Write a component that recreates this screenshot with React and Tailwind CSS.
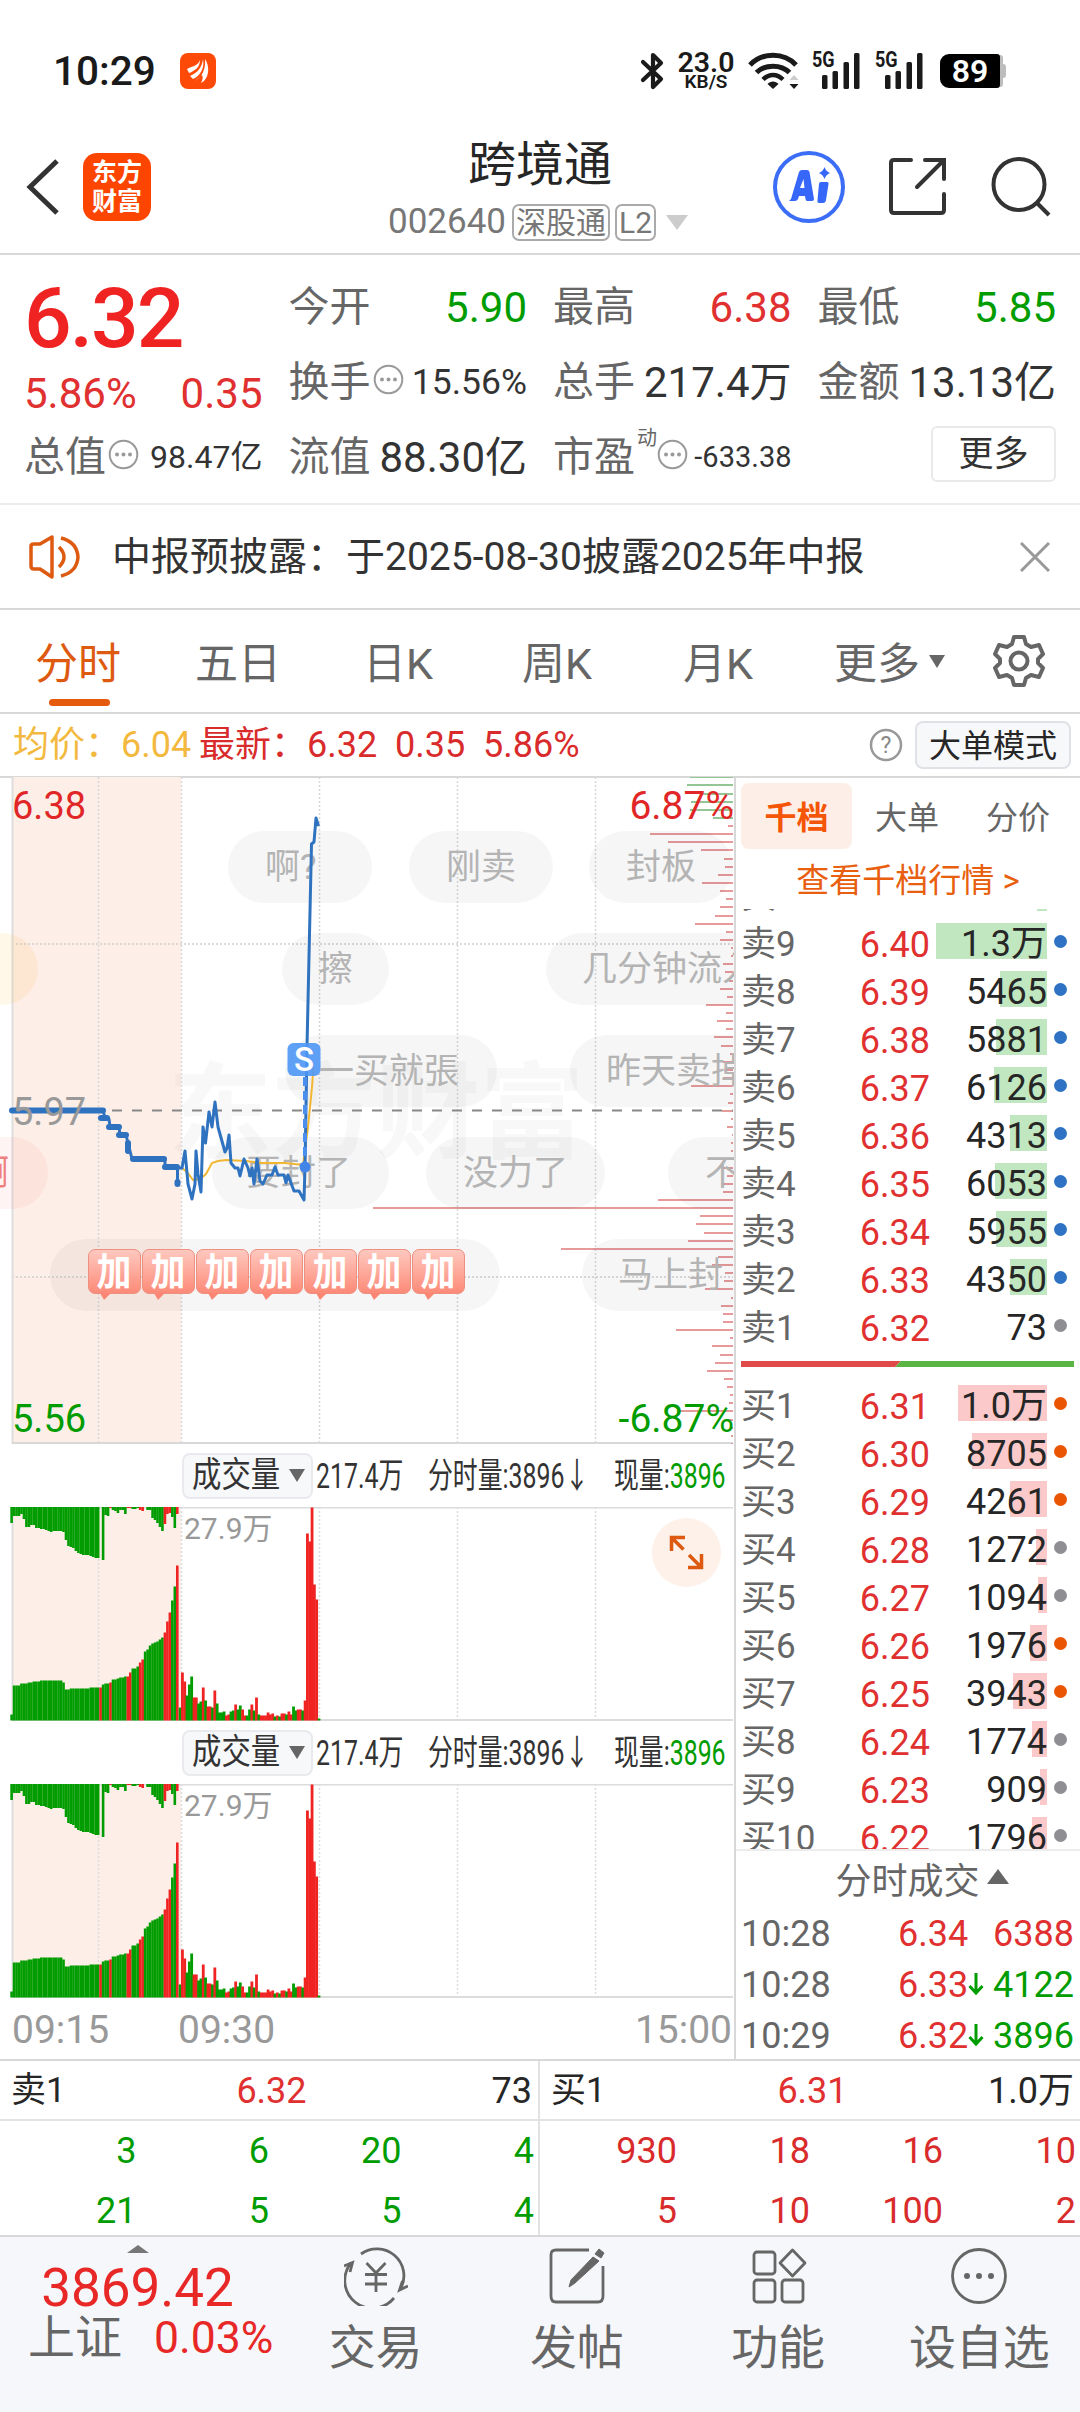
import React from 'react';
import clsx from 'clsx';

const RED = '#f02323';
const GREEN = '#009c00';

// [label, price, volume, bar width, dot colour]
const SELLS = [
  ['卖10', '6.41', '1305', 10, 'blue'],
  ['卖9', '6.40', '1.3万', 111, 'blue'],
  ['卖8', '6.39', '5465', 47, 'blue'],
  ['卖7', '6.38', '5881', 51, 'blue'],
  ['卖6', '6.37', '6126', 53, 'blue'],
  ['卖5', '6.36', '4313', 37, 'blue'],
  ['卖4', '6.35', '6053', 52, 'blue'],
  ['卖3', '6.34', '5955', 51, 'blue'],
  ['卖2', '6.33', '4350', 37, 'blue'],
  ['卖1', '6.32', '73', 0, 'gray'],
];

const BUYS = [
  ['买1', '6.31', '1.0万', 89, 'orange'],
  ['买2', '6.30', '8705', 75, 'orange'],
  ['买3', '6.29', '4261', 37, 'orange'],
  ['买4', '6.28', '1272', 11, 'gray'],
  ['买5', '6.27', '1094', 9, 'gray'],
  ['买6', '6.26', '1976', 17, 'orange'],
  ['买7', '6.25', '3943', 34, 'orange'],
  ['买8', '6.24', '1774', 15, 'gray'],
  ['买9', '6.23', '909', 7, 'gray'],
  ['买10', '6.22', '1796', 15, 'gray'],
];

const TICKS = [
  ['10:28', '6.34', '', '6388'],
  ['10:28', '6.33', '↓', '4122'],
  ['10:29', '6.32', '↓', '3896'],
];

// volume by price, one bar every 8.13px from the top
const PROFILE = [
  43, 46, 31, 42, 43, 20, 5, 83, 65, 32, 9, 8, 15, 31, 13, 7, 13, 18, 38, 7, 13, 2, 2, 10, 8, 4, 13, 6, 27, 7, 16, 7,
  19, 12, 3, 10, 9, 10, 42, 3, 5, 11, 2, 6, 1, 2, 2, 4, 10, 6, 12, 10, 75, 360, 33, 37, 29, 45, 172, 15, 21, 8, 9, 28,
  2, 12, 10, 10, 57, 3, 21, 13, 18, 26, 9, 6, 3, 4, 54, 6, 3, 2, 2,
];

const PRE_TOP = [
  16, 9, 9, 9, 7, 12, 20, 20, 18, 18, 21, 21, 22, 22, 23, 24, 25, 24, 24, 24, 24, 25, 33, 39, 40, 41, 44, 46, 47, 48,
  48, 48, 49, 50, 51, 51, 0, 53, 8, 9, 1, 3, 4, 6, 3, 3, 7, 1, 1, 2, 2, 1, 3, 4, 0, 3, 3, 11, 13, 16, 20, 24, 17, 7,
  6, 10, 21, 7,
];
const PRE_BOTTOM = [
  6, 35, 35, 35, 37, 37, 37, 38, 38, 39, 39, 39, 40, 40, 40, 40, 40, 40, 40, 40, 40, 38, 31, 31, 32, 32, 32, 32, 32,
  32, 32, 32, 33, 33, 33, 33, 33, 36, 37, 37, 38, 41, 41, 42, 43, 43, 44, 44, 48, 52, 52, 54, 58, 61, 69, 71, 75, 77,
  78, 79, 81, 83, 88, 99, 108, 120, 134, 155,
];
const PRE_RED = [36, 40, 47, 48, 52, 53, 62, 63, 64, 67];

// negative = sell volume
const TRADES = [
  -13, 48, 39, -25, -36, -44, 23, 23, -17, -19, 33, -20, 14, 14, -13, 30, -17, -8, -8, -9, 5, 6, -9, -10, 16, -11, -15,
  11, 5, -5, -11, 16, -10, 23, -6, 5, 5, 5, 8, 6, 7, -4, 5, -4, 7, 7, -6, 9, 6, -14, -10, 11, 11, -10, 20, 187, 179,
  213, 136, 121, -2,
];

const PILLS = [
  ['啊?', 228, 54, 144, 37],
  ['刚卖', 409, 54, 144, 37],
  ['封板', 589, 54, 144, 37],
  ['擦', 282, 156, 107, 36],
  ['几分钟流入', 546, 156, 260, 36],
  ['一买就張', 285, 258, 212, 34],
  ['昨天卖掉了', 570, 258, 250, 36],
  ['要封了', 212, 360, 177, 34],
  ['没力了', 426, 360, 179, 37],
  ['不封', 668, 360, 150, 37],
  ['马上封', 582, 462, 180, 36],
];

function Dots() {
  return (
    <svg width="31" height="31" viewBox="0 0 31 31" className="shrink-0">
      <circle cx="15.5" cy="15.5" r="13.8" fill="none" stroke="#999" strokeWidth="2" />
      <circle cx="9" cy="15.5" r="2" fill="#999" />
      <circle cx="15.5" cy="15.5" r="2" fill="#999" />
      <circle cx="22" cy="15.5" r="2" fill="#999" />
    </svg>
  );
}

function Signal() {
  return (
    <div className="relative w-[50px] h-[38px]">
      <span className="absolute left-0 -top-[2px] text-[22px] leading-[20px] font-bold origin-left scale-x-[0.82]">5G</span>
      <svg width="50" height="38" viewBox="0 0 50 38" fill="#1a1a1a">
        <rect x="10" y="23" width="5.5" height="14" rx="1.5" />
        <rect x="20.5" y="19" width="5.5" height="18" rx="1.5" />
        <rect x="31.5" y="10" width="5.5" height="27" rx="1.5" />
        <rect x="42" y="1" width="5.5" height="36" rx="1.5" />
      </svg>
    </div>
  );
}

function StatusBar() {
  return (
    <div className="h-[126px] pt-[15px] pl-[53px] pr-[74px] flex items-center text-[#1a1a1a]">
      <span className="text-[40.5px] leading-[40px] font-medium">10:29</span>
      <svg className="ml-[24px]" width="36" height="36" viewBox="0 0 36 36">
        <rect width="36" height="36" rx="8" fill="#fd4a08" />
        <path d="M7 16 C12 13 18 13 20 7 C20 14 15 18 9 20 Z" fill="#fff" />
        <path d="M10 23 C17 20 22 15 23 6 C25 15 20 23 13 26 Z" fill="#fff" />
        <path d="M15 28 C22 24 26 16 25 6 C31 15 28 27 21 30 C23 26 23 24 22 22 Z" fill="#fff" />
      </svg>
      <div className="ml-auto flex items-center">
        <svg width="26" height="38" viewBox="0 0 26 38" fill="none" stroke="#1a1a1a" strokeWidth="4.2">
          <path d="M3 10 L21 27 L13 35 V3 L21 11 L3 28" strokeLinejoin="round" strokeLinecap="round" />
        </svg>
        <div className="ml-[10px] w-[60px] flex flex-col items-center">
          <span className="text-[28.5px] leading-[21px] font-semibold">23.0</span>
          <span className="text-[19px] leading-[17px] font-semibold">KB/S</span>
        </div>
        <svg className="ml-[12px]" width="52" height="38" viewBox="0 0 52 38" fill="none" stroke="#1a1a1a">
          <path d="M2 13 C14 0 36 0 48 13" strokeWidth="5" />
          <path d="M8.500 20.500 C17 12 33 12 41.500 20.500" strokeWidth="5" />
          <path d="M15 27.500 C21 21.500 29 21.500 35 27.500" strokeWidth="4.5" />
          <path d="M19.500 32 C22 28.500 28 28.500 30.500 32 L25 37 Z" fill="#1a1a1a" stroke="none" />
          <path d="M41.500 28 L46 23 L50.500 28 Z" fill="#ccc" stroke="none" />
          <path d="M41.500 32 H50.500 L46 37 Z" fill="#1a1a1a" stroke="none" />
        </svg>
        <div className="ml-[12px]"><Signal /></div>
        <div className="ml-[13px]"><Signal /></div>
        <div className="ml-[15px] flex items-center">
          <div className="w-[60px] h-[34px] rounded-l-[9px] rounded-r-[3px] bg-black text-white text-[32px] leading-[35px] text-center font-semibold">89</div>
          <div className="w-[3px] h-[32px] rounded-r-[3px] bg-[#bdbdbd]" />
          <div className="w-[3px] h-[14px] rounded-r-[3px] bg-[#bdbdbd]" />
        </div>
      </div>
    </div>
  );
}

function Header() {
  return (
    <div className="h-[129px] border-b-2 border-[#d8d8d8] flex justify-between px-[26px]">
      <div className="w-[330px] flex items-center pb-[5px]">
        <svg width="34" height="58" viewBox="0 0 34 58" fill="none" stroke="#333" strokeWidth="5">
          <path d="M31 3 L4 29 L31 55" />
        </svg>
        <div className="ml-[23px] w-[68px] h-[68px] rounded-[14px] bg-[#fd4500] text-white text-[25px] leading-[29px] font-bold flex flex-col items-center justify-center">
          <span>东方</span>
          <span>财富</span>
        </div>
      </div>
      <div className="flex flex-col items-center">
        <div className="h-[77px] pt-[9px] text-[48px] leading-[60px] text-[#262626]">跨境通</div>
        <div className="relative -left-[2px] flex items-center h-[38px] text-[#777]">
          <span className="text-[35px] leading-[38px]">002640</span>
          <span className="ml-[6px] px-[2px] h-[37px] border-2 border-[#aaa] rounded-[7px] text-[30px] leading-[34px]">深股通</span>
          <span className="ml-[5px] px-[2px] h-[37px] border-2 border-[#aaa] rounded-[7px] text-[30px] leading-[34px]">L2</span>
          <svg className="ml-[10px]" width="22" height="15" viewBox="0 0 22 15"><path d="M0 0 H22 L11 15 Z" fill="#ccc" /></svg>
        </div>
      </div>
      <div className="w-[330px] flex items-center justify-end pb-[5px] pr-[3px]">
        <svg width="74" height="74" viewBox="0 0 74 74">
          <circle cx="37" cy="37" r="34" fill="none" stroke="#3b6df6" strokeWidth="4" />
          <path d="M19 49 L27 22 Q28 20 30 20 H35 Q37 20 37.500 22 L42 49 Q42 51 40 51 H35 Q34 51 33.500 49 L33 46 H27 L26 49 Q25 51 23 51 H17 Z M28 38 H32.500 L31.500 29 Z" fill="#3767f8" fillRule="evenodd" />
          <path d="M49 32 H55 Q57 32 56.500 34 L54 50 Q53.500 53 51 53 H47 Q45 53 45.500 50 L47 34 Q47 32 49 32 Z" fill="#3767f8" />
          <path d="M52.500 17 Q54 21.500 58 23 Q54 24.500 52.500 29 Q51 24.500 47 23 Q51 21.500 52.500 17 Z" fill="#3767f8" />
        </svg>
        <svg className="ml-[41px]" width="62" height="62" viewBox="0 0 62 62" fill="none" stroke="#333" strokeWidth="4" strokeLinecap="round">
          <path d="M24 4 H7 Q4 4 4 7 V54 Q4 57 7 57 H54 Q57 57 57 54 V38" />
          <path d="M38 4 H57 V23 M56 5 L30 31" />
        </svg>
        <svg className="ml-[40px]" width="62" height="62" viewBox="0 0 62 62" fill="none" stroke="#333" strokeWidth="4">
          <circle cx="30" cy="28.500" r="25.500" />
          <path d="M47.500 46.500 L60 59" />
        </svg>
      </div>
    </div>
  );
}

function Stat({ label, value, color = 'text-[#333]', size = 'text-[42px]', icon, sup }) {
  return (
    <div className="flex items-center justify-between h-[75px] text-[#666] whitespace-nowrap">
      <span className="flex items-center text-[41px] leading-[75px]">
        {label}
        {sup && <sup className="text-[20px] leading-[20px] relative -top-[20px] left-[2px]">{sup}</sup>}
        {icon && <span className="relative -top-[3px] ml-[2px]"><Dots /></span>}
      </span>
      <span className={clsx('leading-[75px]', size, color)}>{value}</span>
    </div>
  );
}

function Quote() {
  return (
    <div className="h-[250px] pt-[15px] pl-[24px] pr-[24px] grid grid-cols-4 gap-x-[26px] border-b-2 border-[#ececec]">
      <div>
        <div className="h-[99px] pt-[3px] text-[84px] leading-[92px] font-medium text-[#f02323] tracking-[-2px]">6.32</div>
        <div className="h-[51px] flex justify-between text-[42px] leading-[50px] text-[#e03030]">
          <span>5.86%</span>
          <span>0.35</span>
        </div>
        <Stat label="总值" icon value="98.47亿" size="text-[32px]" />
      </div>
      <div>
        <Stat label="今开" value="5.90" color="text-[#009c00]" />
        <Stat label="换手" icon value="15.56%" size="text-[35.5px]" />
        <Stat label="流值" value="88.30亿" />
      </div>
      <div>
        <Stat label="最高" value="6.38" color="text-[#e03030]" />
        <Stat label="总手" value="217.4万" />
        <Stat label="市盈" sup="动" icon value="-633.38" size="text-[29px]" />
      </div>
      <div>
        <Stat label="最低" value="5.85" color="text-[#009c00]" />
        <Stat label="金额" value="13.13亿" />
        <div className="mt-[6px] ml-auto w-[125px] h-[56px] rounded-[6px] border-2 border-[#e9e9ec] text-center text-[35px] leading-[54px] text-[#333]">更多</div>
      </div>
    </div>
  );
}

function Notice() {
  return (
    <div className="h-[105px] pl-[28px] pr-[30px] flex items-center border-b-2 border-[#d8d8d8]">
      <svg width="54" height="46" viewBox="0 0 54 46" fill="none" stroke="#dd5a10" strokeWidth="3.5">
        <path d="M3 12 Q3 10 6 10 H12 L24 3 V43 L12 35 H6 Q3 35 3 32 Z" strokeLinejoin="round" />
        <path d="M31 13 Q41 23 31 33 M33 4 Q49 8 50 23 Q49 38 33 42" />
      </svg>
      <span className="ml-[30px] text-[39px] leading-[50px] text-[#333]">中报预披露：于2025-08-30披露2025年中报</span>
      <svg className="ml-auto" width="30" height="30" viewBox="0 0 30 30" stroke="#999" strokeWidth="3"><path d="M1 1 L29 29 M29 1 L1 29" /></svg>
    </div>
  );
}

function PeriodTabs() {
  return (
    <div className="h-[104px] relative flex items-center pl-[35px] pr-[34px] border-b-2 border-[#d8d8d8] text-[43px] leading-[60px] text-[#666]">
      <div className="w-[160px] pt-[5px] text-[#dd5a10]">分时</div>
      <div className="w-[168px] pt-[5px]">五日</div>
      <div className="w-[159px] pt-[5px]">日K</div>
      <div className="w-[161px] pt-[5px]">周K</div>
      <div className="w-[151px] pt-[5px]">月K</div>
      <div className="flex items-center pt-[5px]">
        更多
        <svg className="ml-[9px] -mt-[4px]" width="16" height="13" viewBox="0 0 16 13"><path d="M0 0 H16 L8 13 Z" fill="#666" /></svg>
      </div>
      <svg className="ml-auto" width="54" height="54" viewBox="0 0 54 54" fill="none" stroke="#666" strokeWidth="4">
        <path d="M22 3 H32 L34 10 L39 13 L47 11 L51 20 L46 25 V29 L51 34 L47 43 L39 41 L34 44 L32 51 H22 L20 44 L15 41 L7 43 L3 34 L8 29 V25 L3 20 L7 11 L15 13 L20 10 Z" strokeLinejoin="round" />
        <circle cx="27" cy="27" r="8.5" />
      </svg>
      <div className="absolute left-[49px] bottom-[6px] w-[61px] h-[7px] rounded-full bg-[#e55a0c]" />
    </div>
  );
}

function InfoBar() {
  return (
    <div className="h-[64px] flex items-center pl-[13px] pr-[9px] border-b-2 border-[#d8d8d8] text-[36px] leading-[63px] text-[#d92b2b]">
      <span className="text-[#f3b93f] w-[186px] whitespace-nowrap">均价：6.04</span>
      <span>最新：</span>
      <span className="w-[88px]">6.32</span>
      <span className="w-[88px]">0.35</span>
      <span>5.86%</span>
      <svg className="ml-auto" width="34" height="34" viewBox="0 0 34 34">
        <circle cx="17" cy="17" r="15" fill="none" stroke="#999" strokeWidth="2.5" />
        <text x="17" y="25" textAnchor="middle" fontSize="23" fill="#888">?</text>
      </svg>
      <div className="ml-[12px] w-[156px] h-[48px] rounded-[8px] border-2 border-[#dfe1e6] bg-[#f7f8fa] text-center text-[32px] leading-[47px] text-[#262626]">大单模式</div>
    </div>
  );
}

const GRID_X = [98, 181, 319, 457, 595];

function PriceChart() {
  return (
    <div className="relative h-[667px] overflow-hidden">
      <svg className="block" width="734" height="667" viewBox="0 0 734 667">
        <rect x="12" y="0" width="169" height="667" fill="#fdeee7" />
        <text x="168" y="373" fontSize="104" fontWeight="700" fill="#000" opacity="0.025">东方财富</text>
        {GRID_X.map((x) => <path key={x} d={`M${x}.5 0 V667`} stroke="#d8d8d8" strokeWidth="1.5" strokeDasharray="2 2" />)}
        <path d="M12 167 H733 M12 500 H733" stroke="#d0d0d0" strokeWidth="1.5" strokeDasharray="2 2" />
        <path d="M12.5 0 V667" stroke="#ddd" strokeWidth="2" />
        <path d="M12 666 H733" stroke="#d8d8d8" strokeWidth="2" />
        {PROFILE.map((w, i) => (
          <rect key={i} x={733 - w} y={Math.round(8.13 * i - 0.7)} width={w} height="2" fill={i < 6 ? '#94c594' : '#e79a9a'} />
        ))}
      </svg>
      {PILLS.map(([text, left, top, width, pad]) => (
        <div key={text} className="absolute h-[72px] rounded-full bg-black/[0.035] text-[#b4b4b4] text-[35px] leading-[74px] whitespace-nowrap" style={{ left, top, width, paddingLeft: pad }}>{text}</div>
      ))}
      <div className="absolute -left-[60px] top-[156px] w-[98px] h-[72px] rounded-full bg-[#ffb020]/10" />
      <div className="absolute -left-[100px] top-[360px] w-[148px] h-[72px] pr-[39px] rounded-full bg-[#f04040]/[0.06] text-right text-[35px] leading-[74px] text-[#f08080]">啊</div>
      <div className="absolute left-[50px] top-[462px] w-[450px] h-[72px] pl-[38px] pt-[10px] rounded-full bg-black/[0.035] flex gap-[1px]">
        {[0, 1, 2, 3, 4, 5, 6].map((i) => (
          <div key={i} className="relative w-[53px] h-[45px] rounded-[7px] border border-[#ee8f80] bg-linear-to-b from-[#fdc8bf] to-[#fc8a78] text-white text-[38px] leading-[44px] font-bold text-center">
            <span className="inline-block scale-x-[0.92]">加</span>
            <svg className="absolute left-[11px] top-[43px]" width="11" height="7" viewBox="0 0 11 7"><path d="M0 0 H11 L4 7 Z" fill="#fb8674" /></svg>
          </div>
        ))}
      </div>
      <svg className="absolute left-0 top-0" width="734" height="667" viewBox="0 0 734 667">
        <path d="M112 333.5 H733" stroke="#888" strokeWidth="2" strokeDasharray="10 10" />
        <path d="M182 391 L187 395 L193 403 L200 402 L206 397 L212 386 L218 384 L226 383 L246 384 L262 386 L285 386 L303 388 L308 350 L312 310 L313.500 290" fill="none" stroke="#f2b632" strokeWidth="2" />
        <path d="M12 333.5 H103 M101 341 H107 M109 350 H119 M119 358 H126 M128 366 V374 M133 382 H164 M165 390 H177 M177.500 405 V407" stroke="#2f72bf" strokeWidth="6" strokeLinecap="round" fill="none" />
        <path
          d="M103 333 L105 341 L109 342 L110 350 L119 350 L120 358 L126 358 L128 366 L130 374 L132 382 L165 382 V390 H177.500 V406 M177 391 H182 L185 374 L188 407 L192 422 L195 407 L196 374 L198 397 L201 415 L203 350 L205.500 366 L209 335 L212 350 L215 325 L218 350 L225 375 L227 371 L229 358 L231 386 L235 391 H238 L240 399 L244 382 L248 391 L250 399 L252 391 L254 407 L257 382 L260 404 L263 407 L267 398 H272 L275 390 L278 398 H284 L286 406 L288 398 L294 414 H299 L304 423 L305 390 L307 270 L311.500 67 L314 65 L316 41 L318.500 49"
          fill="none" stroke="#2f72bf" strokeWidth="3" strokeLinejoin="round"
        />
        <path d="M305 300 V390" stroke="#4b8fee" strokeWidth="4" strokeDasharray="9 5" />
        <circle cx="305" cy="390" r="5.500" fill="#4285e8" />
        <rect x="287.500" y="266" width="33" height="33" rx="6" fill="#4f97f7" fillOpacity="0.9" />
        <text x="304" y="294" textAnchor="middle" fontSize="33" fontWeight="500" fill="#fff">S</text>
      </svg>
      <div className="absolute left-[12px] top-[9px] text-[38px] leading-[40px] text-[#e02626]">6.38</div>
      <div className="absolute right-0 top-[9px] text-[39px] leading-[40px] text-[#e02626]">6.87%</div>
      <div className="absolute left-[12px] top-[315px] text-[38px] leading-[40px] text-[#999]">5.97</div>
      <div className="absolute left-[12px] top-[622px] text-[38px] leading-[40px] text-[#009c00]">5.56</div>
      <div className="absolute right-0 top-[622px] text-[39px] leading-[40px] text-[#009c00]">-6.87%</div>
    </div>
  );
}

function VolumeChart({ expand }) {
  return (
    <div>
      <div className="h-[63px] flex items-center pl-[182px] text-[35px] leading-[44px] text-[#333] whitespace-nowrap">
        <div className="w-[131px] h-[46px] rounded-[8px] border-2 border-[#e8eaee] bg-[#f7f8fa] flex items-center pl-[8px]">
          <span className="w-[97px]"><span className="inline-block origin-left scale-x-[0.84]">成交量</span></span>
          <svg width="16" height="13" viewBox="0 0 16 13"><path d="M0 0 H16 L8 13 Z" fill="#666" /></svg>
        </div>
        <div className="ml-[3px] w-[112px] pt-[2px]"><span className="inline-block origin-left scale-x-[0.71]">217.4万</span></div>
        <div className="w-[186px] pt-[2px]"><span className="inline-block origin-left scale-x-[0.71]">分时量:3896↓</span></div>
        <div className="w-[115px] pt-[2px]"><span className="inline-block origin-left scale-x-[0.71]">现量:<span className="text-[#009c00]">3896</span></span></div>
      </div>
      <div className="relative h-[214px]">
        <svg className="block" width="734" height="214" viewBox="0 0 734 214">
          <rect x="12" y="0" width="169" height="213" fill="#fdeee7" />
          {GRID_X.map((x) => <path key={x} d={`M${x}.5 0 V213`} stroke="#dcdcdc" strokeWidth="1.5" strokeDasharray="2 2" />)}
          <path d="M12.500 0 V213" stroke="#ddd" strokeWidth="2" />
          <path d="M12 0.500 H733 M12 213 H733" stroke="#dcdcdc" strokeWidth="2" />
          {PRE_TOP.map((h, i) => (
            <rect key={i} x={10.3 + 2.473 * i} y="0" width="2.6" height={h} fill={PRE_RED.includes(i) ? RED : GREEN} />
          ))}
          {PRE_BOTTOM.map((h, i) => (
            <rect key={i} x={10.3 + 2.473 * i} y={213.5 - h} width="2.6" height={h} fill={PRE_RED.includes(i) ? RED : GREEN} />
          ))}
          {TRADES.map((v, i) => (
            <rect key={i} x={178.7 + 2.315 * i} y={213.5 - Math.abs(v)} width="2.8" height={Math.abs(v)} fill={v > 0 ? RED : GREEN} />
          ))}
        </svg>
        <div className="absolute left-[184px] top-[4px] text-[30px] leading-[36px] text-[#999]">27.9万</div>
        {expand && (
          <div className="absolute left-[652px] top-[11px] w-[69px] h-[69px] rounded-full bg-[#fdf1ea] flex items-center justify-center">
            <svg width="35" height="35" viewBox="0 0 35 35" fill="none" stroke="#dd5a10" strokeWidth="3.5">
              <path d="M2.500 16 V2.500 H16 M3 3 L14.500 14.500 M32.500 19 V32.500 H19 M32 32 L20 20" />
            </svg>
          </div>
        )}
      </div>
    </div>
  );
}

const DOT = { blue: 'bg-[#2f72c4]', orange: 'bg-[#ea5504]', gray: 'bg-[#8e8e93]' };

function BookRow({ row, bar }) {
  const [label, price, qty, width, dot] = row;
  return (
    <div className="h-[48px] shrink-0 flex items-center pl-[5px] pr-[13px] text-[36px] leading-[48px]">
      <span className="pt-[5px] w-[91px] text-[35px] text-[#666] whitespace-nowrap">{label}</span>
      <span className="pt-[5px] w-[98px] text-right text-[#e03030]">{price}</span>
      <span className="relative flex-1 h-[48px] text-right text-[#262626]">
        <span className={clsx('absolute right-0 top-[5px] h-[36px]', bar)} style={{ width }} />
        <span className="relative top-[2px]">{qty}</span>
      </span>
      <span className={clsx('ml-[7px] -mt-[1px] size-[13px] rounded-full', DOT[dot])} />
    </div>
  );
}

function OrderBook() {
  return (
    <div className="w-[346px] h-[1282px] border-l-2 border-[#d8d8d8]">
      <div className="pt-[6px] ml-[5px] flex h-[72px] text-[32px] leading-[70px] text-center text-[#666]">
        <div className="w-[111px] rounded-[8px] bg-[#fdeee7] text-[#f45506] font-bold">千档</div>
        <div className="w-[110px]">大单</div>
        <div className="w-[112px]">分价</div>
      </div>
      <div className="h-[60px] text-[33px] leading-[63px] text-center text-[#e8600f]">查看千档行情 &gt;</div>
      <div className="h-[441px] overflow-hidden flex flex-col justify-end">
        {SELLS.map((r) => <BookRow key={r[0]} row={r} bar="bg-[#c0e7c0]" />)}
      </div>
      <svg className="block mt-[11px] ml-[5px]" width="333" height="6" viewBox="0 0 333 6">
        <path d="M0 0 H160 L154 6 H0 Z" fill="#e04a48" />
        <path d="M160 0 H333 V6 H154 Z" fill="#5bb544" />
      </svg>
      <div className="mt-[13px] h-[471px] overflow-hidden border-b-2 border-[#ececec]">
        {BUYS.map((r) => <BookRow key={r[0]} row={r} bar="bg-[#fbc9c9]" />)}
      </div>
      <div className="h-[56px] flex items-center justify-center pl-[28px] text-[36px] leading-[56px] text-[#666]">
        <span className="pt-[5px]">分时成交</span>
        <svg className="ml-[7px] -mt-[6px]" width="22" height="15" viewBox="0 0 22 15"><path d="M0 15 H22 L11 0 Z" fill="#666" /></svg>
      </div>
      {TICKS.map(([time, price, arrow, qty]) => (
        <div key={qty} className="h-[51px] flex pl-[5px] pr-[6px] text-[36px] leading-[55px]">
          <span className="w-[157px] text-[#666]">{time}</span>
          <span className="w-[70px] text-[#e03030]">{price}</span>
          <span className="flex-1 flex items-center">
            {arrow && (
              <svg width="16" height="24" viewBox="0 0 16 24" fill="none" stroke="#009c00" strokeWidth="3"><path d="M8 1 V21 M1.500 14 L8 21 L14.500 14" /></svg>
            )}
          </span>
          <span className={arrow ? 'text-[#009c00]' : 'text-[#e03030]'}>{qty}</span>
        </div>
      ))}
    </div>
  );
}

function QueueSide({ label, price, qty, color, values, className }) {
  return (
    <div className={clsx('w-1/2 text-[36px] leading-[60px]', className)}>
      <div className="h-[60px] flex items-center justify-between border-b-2 border-[#e2e2e2] pl-[11px] pr-[6px] text-[#262626]">
        <span className="w-[160px] pt-[2px] text-[35px]">{label}</span>
        <span className="pt-[2px] text-[#e03030]">{price}</span>
        <span className="w-[160px] pt-[2px] text-right">{qty}</span>
      </div>
      <div className={clsx('grid grid-cols-4 pl-[4px] pr-[4px] text-right', color)}>
        {values.map((v, i) => <span key={i}>{v}</span>)}
      </div>
    </div>
  );
}

function NavItem({ label, children }) {
  return (
    <div className="flex-1 flex flex-col items-center">
      <svg className="mt-[9px]" width="64" height="60" viewBox="0 0 64 60" fill="none" stroke="#666" strokeWidth="2.8">{children}</svg>
      <span className="mt-[12px] text-[47px] leading-[60px] whitespace-nowrap">{label}</span>
    </div>
  );
}

function BottomNav() {
  return (
    <div className="h-[176px] bg-[#f6f7fa] flex text-[#666]">
      <div className="w-[275px] flex flex-col items-center">
        <svg className="mt-[8px]" width="22" height="8" viewBox="0 0 22 8"><path d="M0 8 H22 L11 0 Z" fill="#777" /></svg>
        <span className="mt-[7px] text-[53px] leading-[56px] text-[#e82727]">3869.42</span>
        <div className="flex w-full pl-[28px] text-[47px] leading-[44px]">
          <span className="w-[126px]">上证</span>
          <span className="text-[44.5px] text-[#e82727]">0.03%</span>
        </div>
      </div>
      <NavItem label="交易">
        <path d="M17 8 A27 27 0 0 1 57 42 M50 52 A27 27 0 0 1 7 17" />
        <path d="M0 20 L8.500 16.500 L6 26 M64 40 L55.500 44 L58.500 35" />
        <path d="M22.500 17 L32 27 L41.500 17 M32 27 V46 M21 28.500 H43 M21 38 H43" />
      </NavItem>
      <NavItem label="发帖">
        <path d="M44 4 H11 Q6 4 6 9 V50 Q6 56 11 56 H53 Q58 56 58 50 V20" />
        <path d="M54 3 L59 7 L56 12 L50 8 Z M48 11 L54 15 L30 37 L24 41 L26 34 Z" fill="#666" strokeWidth="1" />
      </NavItem>
      <NavItem label="功能">
        <rect x="8" y="6" width="21" height="22" rx="3" />
        <rect x="8" y="34" width="21" height="22" rx="3" />
        <rect x="36" y="34" width="21" height="22" rx="3" />
        <path d="M46.500 4 L59 17 L46.500 30 L34 17 Z" strokeLinejoin="round" />
      </NavItem>
      <NavItem label="设自选">
        <circle cx="32" cy="30" r="26.500" />
        <g fill="#666" stroke="none">
          <circle cx="20" cy="30" r="3" />
          <circle cx="32" cy="30" r="3" />
          <circle cx="44" cy="30" r="3" />
        </g>
      </NavItem>
    </div>
  );
}

export default function App() {
  return (
    <div className="w-[1080px] h-[2412px] overflow-hidden bg-white font-[Roboto,'Noto_Sans_CJK_SC',sans-serif]">
      <StatusBar />
      <Header />
      <Quote />
      <Notice />
      <PeriodTabs />
      <InfoBar />
      <div className="flex h-[1282px] mt-[-1px]">
        <div className="w-[734px]">
          <PriceChart />
          <VolumeChart expand />
          <VolumeChart />
          <div className="flex h-[61px] pl-[12px] pr-[2px] text-[39px] leading-[65px] text-[#999]">
            <span className="w-[166px]">09:15</span>
            <span>09:30</span>
            <span className="ml-auto">15:00</span>
          </div>
        </div>
        <OrderBook />
      </div>
      <div className="h-[178px] flex border-y-2 border-[#d8d8d8]">
        <QueueSide label="卖1" price="6.32" qty="73" color="text-[#009c00]" values={[3, 6, 20, 4, 21, 5, 5, 4]} className="border-r-2 border-[#e2e2e2]" />
        <QueueSide label="买1" price="6.31" qty="1.0万" color="text-[#d92b2b]" values={[930, 18, 16, 10, 5, 10, 100, 2]} />
      </div>
      <BottomNav />
    </div>
  );
}
